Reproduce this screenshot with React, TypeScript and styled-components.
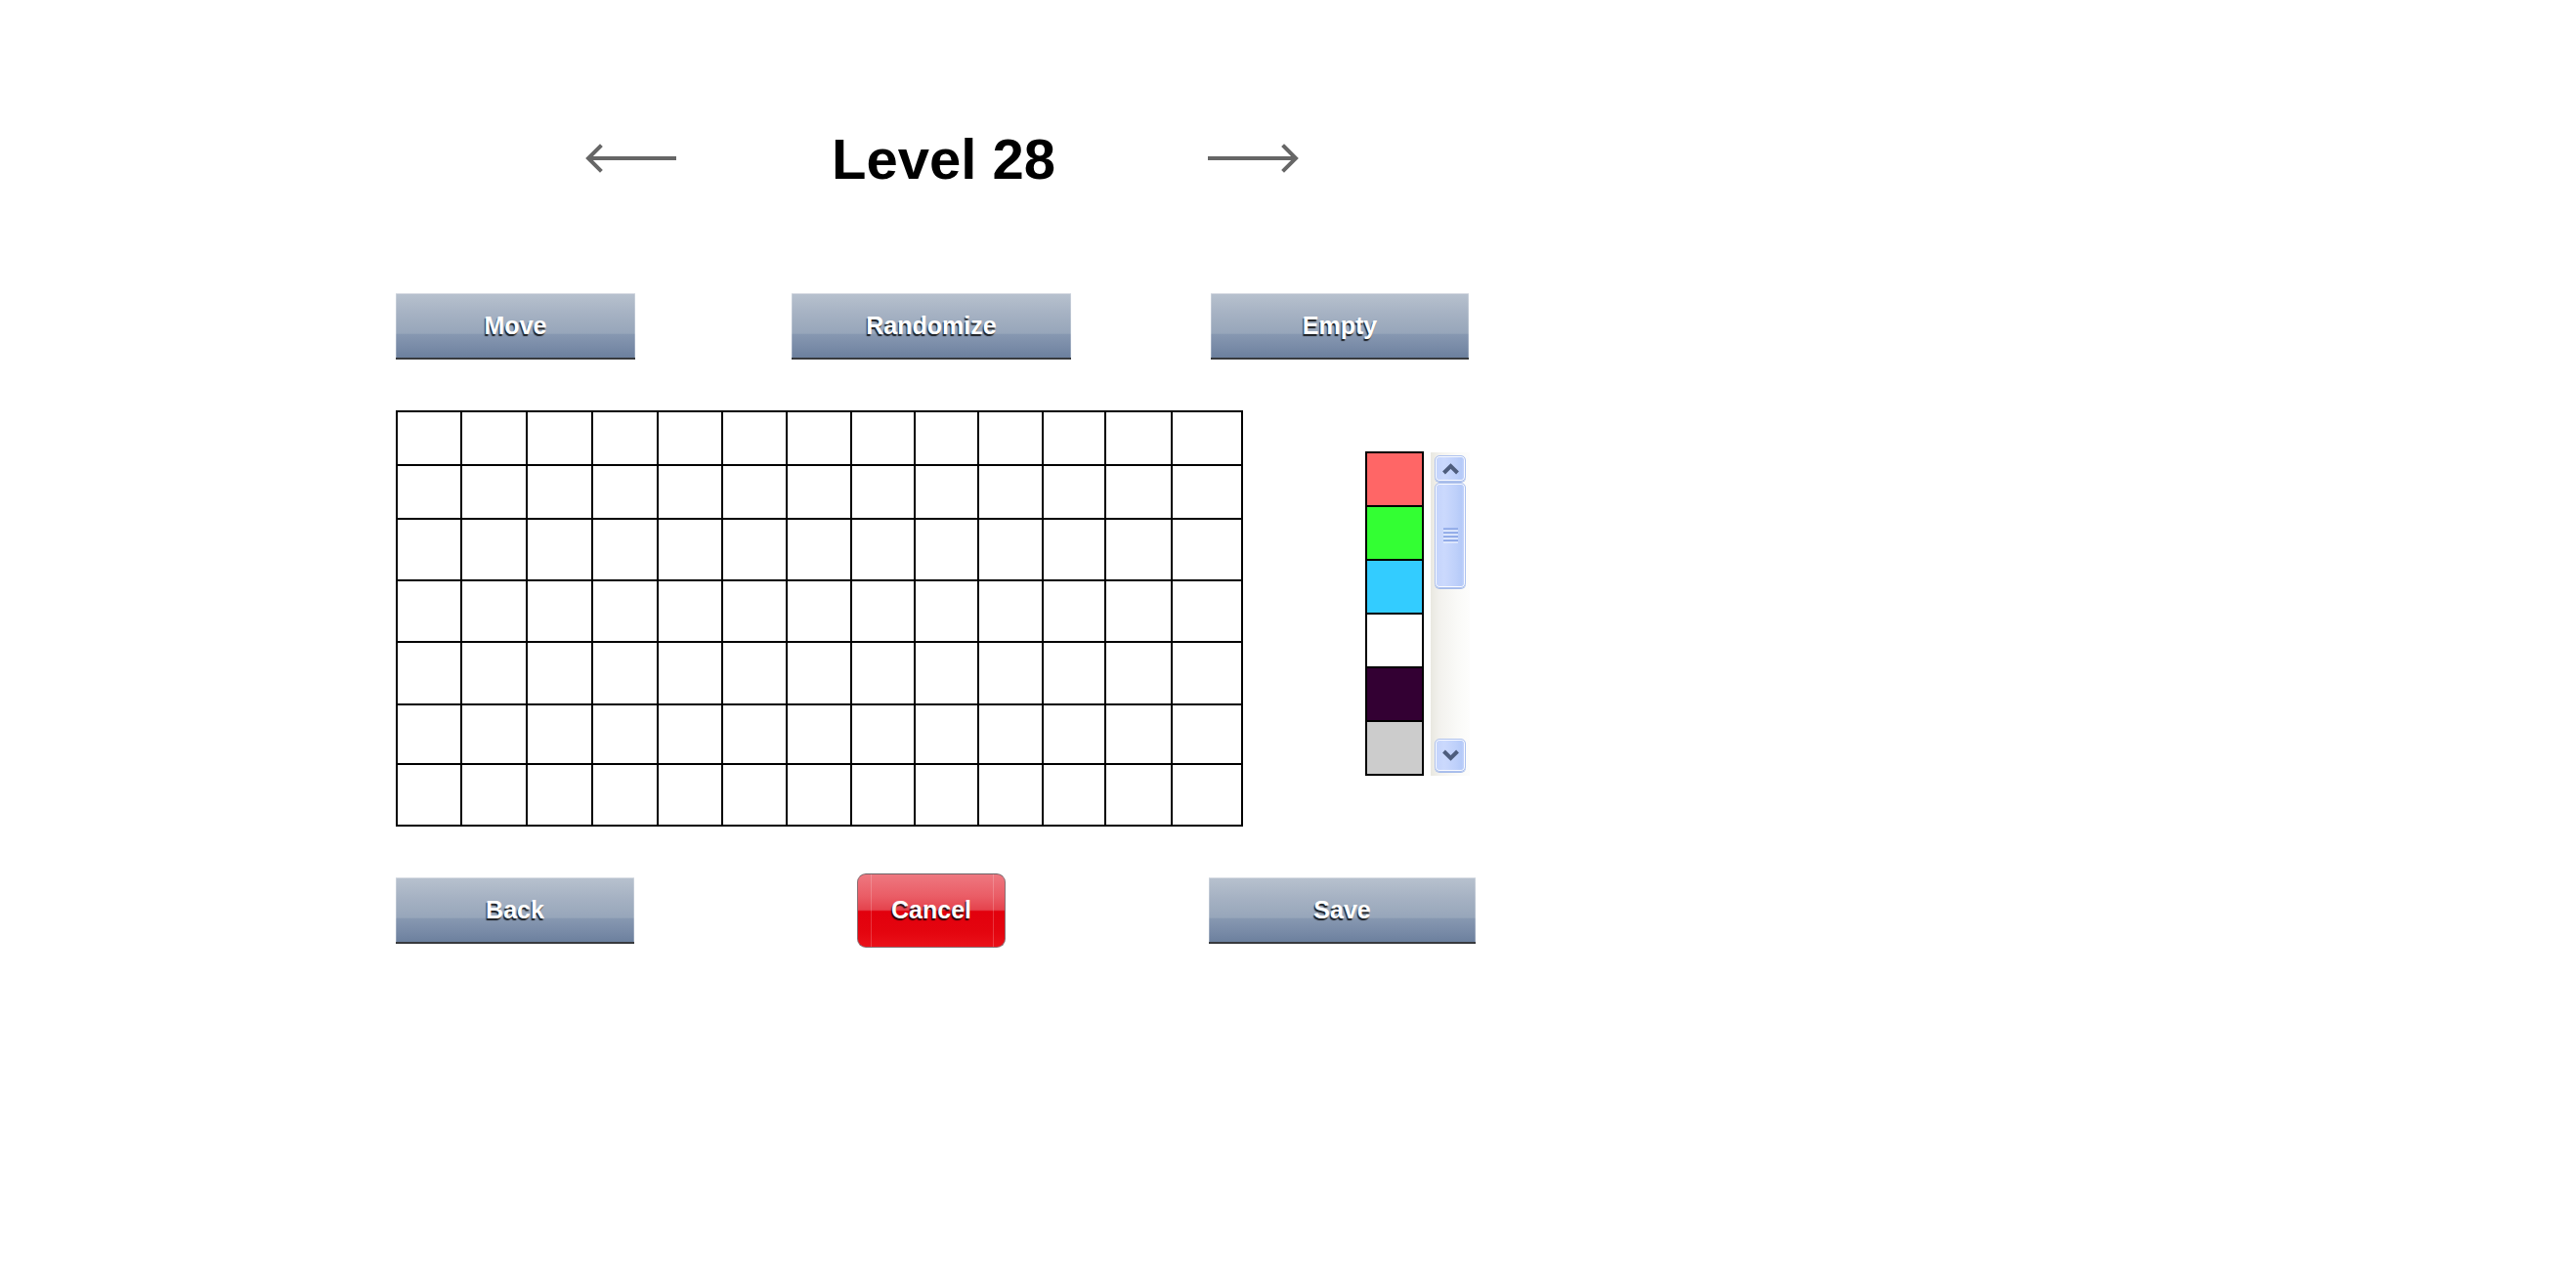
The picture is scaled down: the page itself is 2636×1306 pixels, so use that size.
import React from "react";
import styled, { createGlobalStyle, css } from "styled-components";

const GlobalStyle = createGlobalStyle`
  html, body { margin: 0; padding: 0; background: #ffffff; }
  body { font-family: "Liberation Sans", Arial, Helvetica, sans-serif; }
`;

const Page = styled.div`
  width: 2636px;
  height: 1306px;
  box-sizing: border-box;
  padding: 134px 0 0 405px;
  display: flex;
  flex-direction: column;
  align-items: flex-start;
  background: #fff;
`;

const Header = styled.header`
  display: flex;
  align-items: center;
  height: 58px;
  margin-left: 193px;
`;

const NavArrow = styled.svg`
  display: block;
  width: 96px;
  height: 30px;
  margin-bottom: 3px;
  flex: none;
  cursor: pointer;
`;

const Title = styled.h1`
  margin: 0 154px 0 157px;
  font-family: "Liberation Sans", Arial, sans-serif;
  font-weight: 700;
  font-size: 58px;
  line-height: 58px;
  color: #000;
  white-space: nowrap;
`;

const ButtonRow = styled.div<{ $top: number; $height: number }>`
  display: flex;
  align-items: center;
  margin-top: ${(p) => p.$top}px;
  height: ${(p) => p.$height}px;
`;

const baseButton = css`
  box-sizing: border-box;
  display: flex;
  align-items: center;
  justify-content: center;
  padding: 0;
  font-family: "Liberation Sans", Arial, sans-serif;
  font-weight: 700;
  font-size: 25px;
  color: #ffffff;
  text-shadow: -1px 2px 1px rgba(0, 0, 0, 0.8);
  cursor: pointer;
  flex: none;
`;

const BlueButton = styled.button<{ $w: number; $ml: number }>`
  ${baseButton};
  width: ${(p) => p.$w}px;
  height: 68px;
  margin-left: ${(p) => p.$ml}px;
  border: none;
  border-top: 1px solid #d9dde4;
  border-bottom: 2px solid #383a3e;
  background: linear-gradient(
    to bottom,
    #b7c1ce 0%,
    #a6b2c3 30%,
    #97a6ba 62%,
    #8798b1 63%,
    #7a8ca8 82%,
    #6c809e 100%
  );
  box-shadow: inset 1px 0 0 rgba(255, 255, 255, 0.25),
    inset -1px 0 0 rgba(255, 255, 255, 0.25);
`;

const RedButton = styled.button<{ $w: number; $ml: number }>`
  ${baseButton};
  position: relative;
  width: ${(p) => p.$w}px;
  height: 76px;
  margin-left: ${(p) => p.$ml}px;
  border: 1px solid #8a7074;
  border-top-color: #6d6266;
  border-radius: 9px;
  background: linear-gradient(
    to bottom,
    #ee7880 0%,
    #ea5d66 30%,
    #e5434d 49%,
    #e2000d 51%,
    #e4050f 80%,
    #ea1119 100%
  );

  &::after {
    content: "";
    position: absolute;
    top: 0;
    bottom: 0;
    left: 13px;
    right: 11px;
    border-left: 1px solid rgba(255, 255, 255, 0.2);
    border-right: 1px solid rgba(255, 255, 255, 0.2);
    pointer-events: none;
  }
`;

const ButtonLabel = styled.span`
  position: relative;
  z-index: 1;
`;

const Editor = styled.section`
  display: flex;
  align-items: flex-start;
  margin-top: 52px;
`;

const COLS = [66, 67, 67, 67, 66, 66, 66, 65, 65, 66, 64, 68, 72];
const ROWS = [55, 55, 63, 63, 64, 61, 63];

const Board = styled.div`
  display: grid;
  grid-template-columns: ${COLS.map((c) => `${c}px`).join(" ")};
  grid-template-rows: ${ROWS.map((r) => `${r}px`).join(" ")};
  border-left: 2px solid #000;
  border-top: 2px solid #000;
  background: #fff;
`;

const Cell = styled.div`
  box-sizing: border-box;
  border-right: 2px solid #000;
  border-bottom: 2px solid #000;
  background: #fff;
`;

const Palette = styled.div`
  display: flex;
  flex-direction: column;
  width: 60px;
  box-sizing: border-box;
  border: 2px solid #000;
  margin-left: 125px;
  margin-top: 42px;
`;

const Swatch = styled.div<{ $color: string }>`
  height: 53px;
  background: ${(p) => p.$color};
  border-bottom: 2px solid #000;
  &:last-child {
    border-bottom: none;
  }
`;

const Track = styled.div`
  box-sizing: border-box;
  display: flex;
  flex-direction: column;
  width: 40px;
  height: 331px;
  margin-left: 7px;
  margin-top: 43px;
  padding: 3px 4px 4px 4px;
  background: linear-gradient(to right, #e9e8e1 0%, #f3f2ee 25%, #fafaf8 70%, #fdfdfc 100%);
`;

const scrollPart = css`
  box-sizing: border-box;
  width: 32px;
  display: flex;
  align-items: center;
  justify-content: center;
  border: 1px solid #adc1ee;
  border-radius: 5px;
  background: linear-gradient(
    to right,
    #c3d3fb 0%,
    #cbd9fd 30%,
    #bed0fa 70%,
    #b5caf8 88%,
    #c4d5fc 100%
  );
  box-shadow: inset 0 0 0 1px rgba(255, 255, 255, 0.9),
    0 1px 0 #a5bbe9;
  flex: none;
`;

const ScrollButton = styled.div<{ $h: number }>`
  ${scrollPart};
  height: ${(p) => p.$h}px;
`;

const Thumb = styled.div`
  ${scrollPart};
  height: 108px;
  margin-top: 1px;
`;

const TrackSpace = styled.div`
  flex: 1;
`;

const Chevron = styled.svg`
  display: block;
  width: 19px;
  height: 12px;
`;

const Grip = styled.svg`
  display: block;
  width: 15px;
  height: 16px;
`;

const LeftArrow = () => (
  <NavArrow viewBox="0 0 96 30" aria-label="Previous level">
    <line x1="4" y1="15" x2="94" y2="15" stroke="#666" strokeWidth="4" />
    <polyline points="16,3 4,15 16,27" fill="none" stroke="#666" strokeWidth="4" strokeLinecap="square" strokeLinejoin="miter" />
  </NavArrow>
);

const RightArrow = () => (
  <NavArrow viewBox="0 0 96 30" aria-label="Next level">
    <line x1="2" y1="15" x2="92" y2="15" stroke="#666" strokeWidth="4" />
    <polyline points="80,3 92,15 80,27" fill="none" stroke="#666" strokeWidth="4" strokeLinecap="square" strokeLinejoin="miter" />
  </NavArrow>
);

const PALETTE = ["#ff6666", "#33ff33", "#33ccff", "#ffffff", "#330033", "#cccccc"];

export default function App() {
  const cells = [];
  for (let r = 0; r < ROWS.length; r++) {
    for (let c = 0; c < COLS.length; c++) {
      cells.push(<Cell key={`${r}-${c}`} />);
    }
  }

  return (
    <>
      <GlobalStyle />
      <Page>
        <Header>
          <LeftArrow />
          <Title>Level 28</Title>
          <RightArrow />
        </Header>

        <ButtonRow $top={108} $height={68}>
          <BlueButton $w={245} $ml={0}>
            <ButtonLabel>Move</ButtonLabel>
          </BlueButton>
          <BlueButton $w={286} $ml={160}>
            <ButtonLabel>Randomize</ButtonLabel>
          </BlueButton>
          <BlueButton $w={264} $ml={143}>
            <ButtonLabel>Empty</ButtonLabel>
          </BlueButton>
        </ButtonRow>

        <Editor>
          <Board>{cells}</Board>
          <Palette>
            {PALETTE.map((c) => (
              <Swatch key={c} $color={c} />
            ))}
          </Palette>
          <Track>
            <ScrollButton $h={27}>
              <Chevron viewBox="0 0 19 12">
                <polyline points="2.5,10 9.5,3 16.5,10" fill="none" stroke="#4e5d7d" strokeWidth="4" />
              </Chevron>
            </ScrollButton>
            <Thumb>
              <Grip viewBox="0 0 15 16">
                {[1.5, 5.5, 9.5, 13.5].map((y) => (
                  <g key={y}>
                    <line x1="0" y1={y} x2="15" y2={y} stroke="#86a2e4" strokeWidth="2" />
                    <line x1="0" y1={y + 1.6} x2="15" y2={y + 1.6} stroke="#f2f6ff" strokeWidth="1.2" />
                  </g>
                ))}
              </Grip>
            </Thumb>
            <TrackSpace />
            <ScrollButton $h={34}>
              <Chevron viewBox="0 0 19 12">
                <polyline points="2.5,2 9.5,9 16.5,2" fill="none" stroke="#4e5d7d" strokeWidth="4" />
              </Chevron>
            </ScrollButton>
          </Track>
        </Editor>

        <ButtonRow $top={47} $height={77}>
          <BlueButton $w={244} $ml={0}>
            <ButtonLabel>Back</ButtonLabel>
          </BlueButton>
          <RedButton $w={152} $ml={228}>
            <ButtonLabel>Cancel</ButtonLabel>
          </RedButton>
          <BlueButton $w={273} $ml={208}>
            <ButtonLabel>Save</ButtonLabel>
          </BlueButton>
        </ButtonRow>
      </Page>
    </>
  );
}
